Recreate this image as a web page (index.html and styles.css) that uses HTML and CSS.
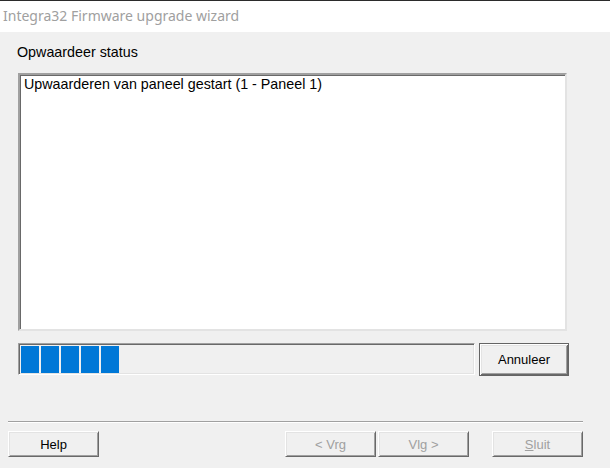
FILE: index.html
```html
<!DOCTYPE html>
<html>
<head>
<meta charset="utf-8">
<link rel="stylesheet" href="styles.css">
</head>
<body>
<div class="titlebar">Integra32 Firmware upgrade wizard</div>
<div class="content">
  <div class="label">Opwaardeer status</div>
  <div class="listbox">
    <div class="item">Upwaarderen van paneel gestart (1 - Paneel 1)</div>
  </div>
  <div class="progress-row">
    <div class="progress">
      <span class="block"></span><span class="block"></span><span class="block"></span><span class="block"></span><span class="block"></span>
    </div>
    <button class="btn default">Annuleer</button>
  </div>
</div>
<div class="separator"></div>
<div class="buttons">
  <button class="btn">Help</button>
  <div class="spacer"></div>
  <button class="btn disabled">&lt; Vrg</button>
  <button class="btn disabled next">Vlg &gt;</button>
  <button class="btn disabled close"><u>S</u>luit</button>
</div>
</body>
</html>
```
FILE: styles.css
```css
* { box-sizing: border-box; }
html, body {
  margin: 0;
  padding: 0;
  width: 610px;
  height: 468px;
  overflow: hidden;
  background: #f0f0f0;
  font-family: "Liberation Sans", Arial, sans-serif;
  font-size: 13px;
  color: #000;
}
.titlebar {
  height: 32px;
  background: #fff;
  border-top: 1px solid #2b2b2b;
  color: #a0a0a0;
  font-family: "Noto Sans", "Open Sans", sans-serif;
  font-size: 14px;
  line-height: 30px;
  padding-left: 3px;
}
.content {
  padding-left: 18px;
}
.label {
  margin-top: 12px;
  font-size: 14.3px;
  line-height: 16px;
  height: 16px;
  margin-left: -1px;
}
.listbox {
  margin-top: 13px;
  width: 549px;
  height: 258px;
  background: #fff;
  border-style: solid;
  border-width: 2px;
  border-color: #a0a0a0 #e3e3e3 #e3e3e3 #a0a0a0;
  box-shadow: inset 1px 1px 0 #696969, inset -1px -1px 0 #fff;
  padding: 1px 3px 1px 4px;
}
.item {
  font-size: 14.3px;
  line-height: 16px;
}
.progress-row {
  display: flex;
  margin-top: 12px;
  gap: 4px;
}
.progress {
  width: 457px;
  height: 32px;
  border: 1px solid;
  border-color: #a0a0a0 #fff #fff #a0a0a0;
  box-shadow: inset 1px 1px 0 #696969, inset -1px -1px 0 #e3e3e3;
  padding: 2px 0 1px 2px;
  display: flex;
  gap: 2px;
}
.block {
  width: 18px;
  height: 27px;
  background: #0078d7;
}
.btn {
  font-family: "Liberation Sans", Arial, sans-serif;
  font-size: 13px;
  color: #000;
  background: #f0f0f0;
  width: 91px;
  height: 26px;
  padding: 0;
  margin: 0;
  border: 1px solid;
  border-color: #fff #696969 #696969 #fff;
  box-shadow: inset 1px 1px 0 #e3e3e3, inset -1px -1px 0 #a0a0a0;
  border-radius: 0;
}
.btn.default {
  width: 90px;
  height: 33px;
  border: 1px solid #646464;
  box-shadow: inset 1px 1px 0 #fff, inset -1px -1px 0 #696969, inset 2px 2px 0 #e3e3e3, inset -2px -2px 0 #a0a0a0;
}
.btn.disabled { color: #a0a0a0; }
.separator {
  margin: 45px 0 0 8px;
  width: 575px;
  height: 2px;
  border-top: 1px solid #a0a0a0;
  border-bottom: 1px solid #fff;
}
.buttons {
  display: flex;
  margin-top: 8px;
  padding-left: 8px;
  width: 583px;
}
.spacer { flex: 1; }
.next { margin-left: 2px; }
.close { margin-left: 23px; }
```
